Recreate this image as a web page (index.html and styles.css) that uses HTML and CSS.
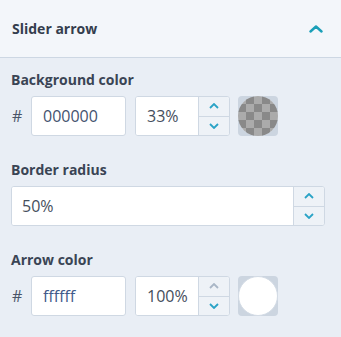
FILE: index.html
```html
<!DOCTYPE html>
<html lang="en">
<head>
    <meta charset="UTF-8">
    <meta name="viewport" content="width=device-width, initial-scale=1.0">
    <title>Slider arrow</title>
    <link rel="stylesheet" href="styles.css">
</head>
<body>
    <div class="panel-header">
        <span class="panel-title">Slider arrow</span>
        <svg class="toggle" width="14" height="8" viewBox="0 0 14 8">
            <path d="M1.5 6.5 L7 1.5 L12.5 6.5" fill="none" stroke="#1a9fb8" stroke-width="2.4" stroke-linecap="round" stroke-linejoin="round"/>
        </svg>
    </div>

    <div class="field">
        <div class="field-label">Background color</div>
        <div class="color-row">
            <span class="hash">#</span>
            <input class="text-input hex" type="text" value="000000">
            <div class="number-input small">
                <input type="text" value="33%">
                <div class="spinner">
                    <button class="spin"><svg width="10" height="6" viewBox="0 0 10 6"><path d="M1 5 L5 1 L9 5" fill="none" stroke="#2aa3c6" stroke-width="1.8"/></svg></button>
                    <button class="spin"><svg width="10" height="6" viewBox="0 0 10 6"><path d="M1 1 L5 5 L9 1" fill="none" stroke="#2aa3c6" stroke-width="1.8"/></svg></button>
                </div>
            </div>
            <div class="swatch"><div class="swatch-dot checker"><div class="swatch-fill dark"></div></div></div>
        </div>
    </div>

    <div class="field">
        <div class="field-label">Border radius</div>
        <div class="number-input wide">
            <input type="text" value="50%">
            <div class="spinner">
                <button class="spin"><svg width="10" height="6" viewBox="0 0 10 6"><path d="M1 5 L5 1 L9 5" fill="none" stroke="#2aa3c6" stroke-width="1.8"/></svg></button>
                <button class="spin"><svg width="10" height="6" viewBox="0 0 10 6"><path d="M1 1 L5 5 L9 1" fill="none" stroke="#2aa3c6" stroke-width="1.8"/></svg></button>
            </div>
        </div>
    </div>

    <div class="field">
        <div class="field-label">Arrow color</div>
        <div class="color-row">
            <span class="hash">#</span>
            <input class="text-input hex light" type="text" value="ffffff">
            <div class="number-input small">
                <input type="text" value="100%">
                <div class="spinner">
                    <button class="spin"><svg width="10" height="6" viewBox="0 0 10 6"><path d="M1 5 L5 1 L9 5" fill="none" stroke="#a9b6c6" stroke-width="1.8"/></svg></button>
                    <button class="spin"><svg width="10" height="6" viewBox="0 0 10 6"><path d="M1 1 L5 5 L9 1" fill="none" stroke="#2aa3c6" stroke-width="1.8"/></svg></button>
                </div>
            </div>
            <div class="swatch"><div class="swatch-dot white"></div></div>
        </div>
    </div>
</body>
</html>
```
FILE: styles.css
```css
body {
    margin: 0;
    background-color: #e9eef5;
    font-family: "Open Sans", Arial, sans-serif;
    color: #3a4454;
}
.panel-header {
    height: 57px;
    background-color: #f3f6fa;
    border-bottom: 1px solid #cdd7e3;
    display: flex;
    align-items: center;
    justify-content: space-between;
    padding: 0 18px 0 12px;
}
.panel-title {
    font-size: 14px;
    font-weight: 700;
    color: #343d4d;
}
.toggle {
    display: block;
}
.field {
    padding: 13px 16px 0 11px;
}
.field + .field {
    padding-top: 25px;
}
.field-label {
    font-size: 14px;
    line-height: 18px;
    font-weight: 700;
    color: #3a4454;
    margin-bottom: 7px;
}
.color-row {
    display: flex;
    align-items: center;
}
.hash {
    width: 9px;
    margin: 0 10px 0 1px;
    font-size: 16px;
    color: #4a5568;
}
.text-input,
.number-input input {
    font-family: "Open Sans", Arial, sans-serif;
    font-size: 16px;
    color: #46526a;
    border: none;
    outline: none;
    background: #fff;
    padding: 0 0 0 11px;
    margin: 0;
}
.text-input {
    box-sizing: border-box;
    width: 95px;
    height: 40px;
    border: 1px solid #cfd8e3;
    border-radius: 3px;
}
.hex {
    color: #44536f;
}
.hex.light {
    color: #3f5a8a;
}
.number-input {
    display: flex;
    box-sizing: border-box;
    height: 40px;
    border: 1px solid #cfd8e3;
    border-radius: 3px;
    background: #fff;
    overflow: hidden;
}
.number-input input {
    flex: 1;
    min-width: 0;
    color: #454e5c;
}
.number-input.small {
    width: 95px;
    margin-left: 9px;
}
.number-input.wide {
    width: 100%;
}
.number-input.wide input {
    padding-left: 10px;
}
.spinner {
    width: 30px;
    display: flex;
    flex-direction: column;
    border-left: 1px solid #cfd8e3;
    background: #eef2f7;
}
.spin {
    flex: 1;
    display: flex;
    align-items: center;
    justify-content: center;
    border: none;
    padding: 0;
    background: transparent;
}
.spin + .spin {
    border-top: 1px solid #cfd8e3;
}
.spin svg {
    display: block;
}
.swatch {
    width: 40px;
    height: 40px;
    margin-left: 8px;
    border-radius: 4px;
    background-color: #ccd5e0;
}
.swatch-dot {
    box-sizing: border-box;
    width: 40px;
    height: 40px;
    border-radius: 50%;
    overflow: hidden;
}
.checker {
    background-color: #fff;
    background-image:
        linear-gradient(45deg, #ccc 25%, transparent 25%, transparent 75%, #ccc 75%),
        linear-gradient(45deg, #ccc 25%, transparent 25%, transparent 75%, #ccc 75%);
    background-size: 16px 16px;
    background-position: 0 0, 8px 8px;
}
.swatch-fill {
    width: 100%;
    height: 100%;
}
.swatch-fill.dark {
    background: rgba(0, 0, 0, 0.33);
}
.swatch-dot.white {
    background: #fff;
    border: 1px solid #d3dbe5;
}
```
